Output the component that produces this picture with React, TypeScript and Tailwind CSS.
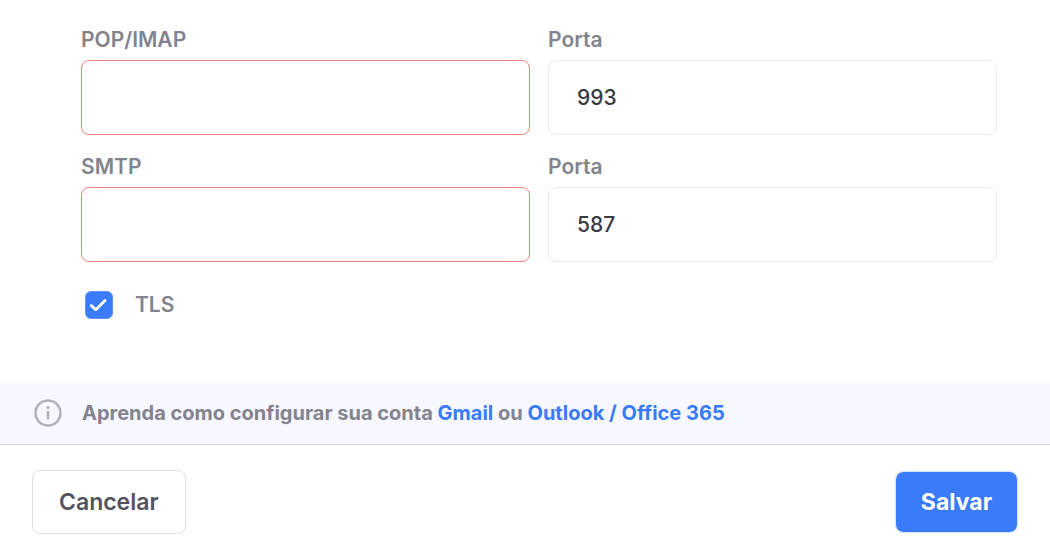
import React, {useState} from 'react';
import clsx from 'clsx';

interface ValuesProps {
    imap: string;
    imapPort: string;
    smtp: string;
    smtpPort: string;
}

interface FieldProps {
    id: keyof ValuesProps;
    label: string;
    value: string;
    invalid?: boolean;
    handleChange: (name: keyof ValuesProps, value: string) => void;
}

const initialValues: ValuesProps = {
    imap: '',
    imapPort: '993',
    smtp: '',
    smtpPort: '587',
};

const Field = ({id, label, value, invalid, handleChange}: FieldProps) => (
    <div className="flex flex-col gap-1">
        <label htmlFor={id} className="text-[21px] leading-8 font-semibold text-[#83838d]">
            {label}
        </label>
        <input
            id={id}
            type="text"
            value={value}
            aria-invalid={invalid}
            onChange={(e) => handleChange(id, e.target.value)}
            className={clsx(
                'h-[75px] w-full rounded-lg border bg-white px-7 text-[21px] font-medium text-[#383a42] outline-none',
                invalid ? 'border-[#f1807c]' : 'border-[#e9e9f3]'
            )}
        />
    </div>
);

export default function App() {
    const [values, setValues] = useState<ValuesProps>(initialValues);
    const [tls, setTls] = useState(true);

    const handleChange = (name: keyof ValuesProps, value: string) => {
        setValues({...values, [name]: value});
    };

    const handleSubmit: React.FormEventHandler<HTMLFormElement> = (e) => {
        e.preventDefault();
    };

    return (
        <form onSubmit={handleSubmit} noValidate className="bg-white font-['Inter',sans-serif]">
            <div className="pt-6 pr-[53px] pb-[62px] pl-[81px]">
                <div className="grid grid-cols-2 gap-x-[18px] gap-y-4">
                    <Field id="imap" label="POP/IMAP" value={values.imap} invalid={!values.imap} handleChange={handleChange} />
                    <Field id="imapPort" label="Porta" value={values.imapPort} handleChange={handleChange} />
                    <Field id="smtp" label="SMTP" value={values.smtp} invalid={!values.smtp} handleChange={handleChange} />
                    <Field id="smtpPort" label="Porta" value={values.smtpPort} handleChange={handleChange} />
                </div>
                <div className="mt-[27px] flex items-center pl-1">
                    <div className="grid size-7">
                        <input
                            id="tls"
                            type="checkbox"
                            checked={tls}
                            onChange={(e) => setTls(e.target.checked)}
                            className="col-start-1 row-start-1 size-7 appearance-none rounded-md border border-[#d0d0da] bg-white checked:border-[#5f95fa] checked:bg-[#397bf8]"
                        />
                        {tls && (
                            <svg
                                viewBox="0 0 28 28"
                                fill="none"
                                stroke="white"
                                strokeWidth="2.8"
                                strokeLinecap="round"
                                strokeLinejoin="round"
                                className="pointer-events-none col-start-1 row-start-1 size-7"
                            >
                                <path d="M6.3 14.6L10.8 18.7L20 9.4" />
                            </svg>
                        )}
                    </div>
                    <label htmlFor="tls" className="pl-[22px] text-[21px] leading-8 font-semibold text-[#83838d]">
                        TLS
                    </label>
                </div>
            </div>

            <div className="flex items-center gap-5 border-b border-[#d1d1db] bg-[#f7f7ff] pt-[14px] pb-[15px] pl-[34px]">
                <svg viewBox="0 0 28 28" fill="none" stroke="#b0b0bc" className="size-7">
                    <circle cx="14" cy="14" r="12.5" strokeWidth="2.4" />
                    <path d="M14 12.2V20.4" strokeWidth="2.6" />
                    <circle cx="14" cy="8.6" r="1.6" fill="#b0b0bc" stroke="none" />
                </svg>
                <p className="text-xl leading-8 font-bold text-[#83838d]">
                    Aprenda como configurar sua conta{' '}
                    <a href="#gmail" className="text-[#397bf8]">Gmail</a> ou{' '}
                    <a href="#outlook" className="text-[#397bf8]">Outlook / Office 365</a>
                </p>
            </div>

            <div className="flex items-center justify-between px-8 py-[25px]">
                <button
                    type="button"
                    className="h-16 rounded-lg border border-[#dfdfe9] bg-white px-[26px] text-[23px] font-semibold text-[#53535f]"
                >
                    Cancelar
                </button>
                <button
                    type="submit"
                    className="h-[62px] rounded-lg border border-[#d6e2fb] bg-[#397bf8] bg-clip-padding px-[25px] text-[23px] font-bold text-white"
                >
                    Salvar
                </button>
            </div>
        </form>
    );
}
